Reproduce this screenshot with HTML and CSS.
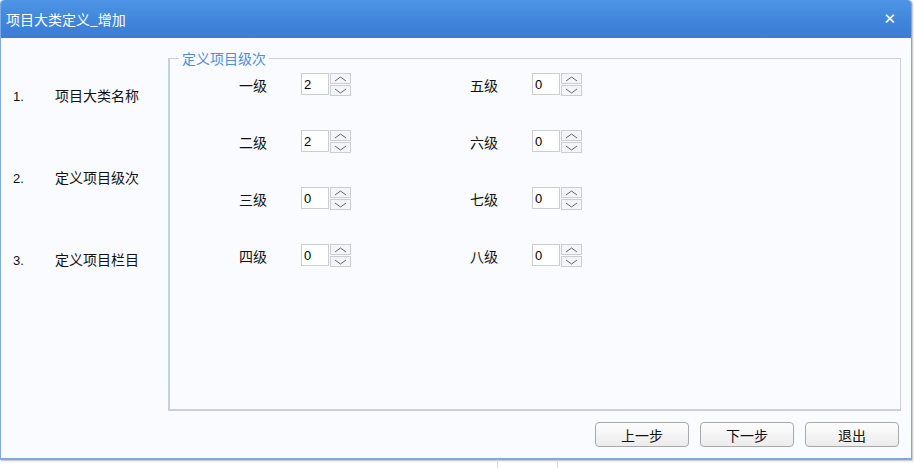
FILE: index.html
```html
<!DOCTYPE html>
<html>
<head>
    <title>项目大类定义_增加</title>
    <link rel="stylesheet" href="styles.css">
</head>
<body>
    <div class="dialog">
        <div class="title-bar">
            <span class="title">项目大类定义_增加</span>
            <span class="close">&#x2715;</span>
        </div>
        <div class="dialog-body">
            <div class="content">
                <ul class="steps">
                    <li><span class="num">1.</span><span class="step-name">项目大类名称</span></li>
                    <li><span class="num">2.</span><span class="step-name">定义项目级次</span></li>
                    <li><span class="num">3.</span><span class="step-name">定义项目栏目</span></li>
                </ul>
                <fieldset class="levels">
                    <legend>定义项目级次</legend>
                    <div class="level-grid" id="grid"></div>
                </fieldset>
            </div>
            <div class="buttons">
                <button>上一步</button>
                <button>下一步</button>
                <button>退出</button>
            </div>
        </div>
    </div>
    <div class="under">
        <div class="under-cell"></div>
    </div>

    <script>
        // left column then right column, filled row by row
        const levels = [
            ["一级", 2], ["五级", 0],
            ["二级", 2], ["六级", 0],
            ["三级", 0], ["七级", 0],
            ["四级", 0], ["八级", 0]
        ];
        const up = '<svg width="13" height="6" viewBox="0 0 13 6"><polyline points="1,5 6.5,1 12,5" fill="none" stroke="#666" stroke-width="1"/></svg>';
        const down = '<svg width="13" height="6" viewBox="0 0 13 6"><polyline points="1,1 6.5,5 12,1" fill="none" stroke="#666" stroke-width="1"/></svg>';

        let grid = document.getElementById("grid");
        levels.forEach(l => {
            let div = document.createElement("div");
            div.className = "level";
            div.innerHTML = `<span class="level-name">${l[0]}</span>
                <div class="spin"><input value="${l[1]}">
                <div class="spin-btns"><span>${up}</span><span>${down}</span></div></div>`;
            grid.appendChild(div);
        });
    </script>
</body>
</html>
```

FILE: styles.css
```css
body {
    margin: 0;
    background: #ffffff;
    font-family: "Noto Sans CJK SC", "DejaVu Sans", sans-serif;
    font-size: 14px;
    color: #111;
}

.dialog {
    width: 910px;
    height: 458px;
    border: 1px solid #7fa9e3;
    border-top: none;
    border-bottom: 2px solid #80a8dc;
    border-radius: 4px 4px 0 0;
    box-shadow: 1px 1px 2px rgba(0,0,0,0.25);
    background: #f9fbff;
    display: flex;
    flex-direction: column;
}

.title-bar {
    height: 38px;
    background: linear-gradient(#4d95e4, #3f84da 60%, #3a7dd4);
    border-radius: 4px 4px 0 0;
    display: flex;
    align-items: center;
    justify-content: space-between;
    padding: 0 15px 0 5px;
    color: #fff;
}

.title {
    font-size: 14px;
}

.close {
    font-size: 15px;
    font-weight: bold;
    font-family: "DejaVu Sans", sans-serif;
}

.dialog-body {
    flex: 1;
    display: flex;
    flex-direction: column;
}

.content {
    display: flex;
    height: 373px;
}

.steps {
    list-style: none;
    margin: 0;
    padding: 47px 0 0 12px;
    width: 155px;
}

.steps li {
    display: flex;
    align-items: baseline;
    height: 82px;
}

.num {
    width: 42px;
    font-family: "Liberation Sans", sans-serif;
    font-size: 13px;
}

.levels {
    flex: 1;
    margin: 10px 10px 0 0;
    padding: 6px 0 0 0;
    border: 1px solid #c7d0de;
    border-left-width: 2px;
    border-bottom-width: 2px;
}

.levels legend {
    color: #4b8ee2;
    padding: 0 3px;
    margin-left: 9px;
    font-size: 14px;
}

.level-grid {
    display: grid;
    grid-template-columns: 231px 231px;
    grid-auto-rows: 57px;
    padding-left: 69px;
}

.level {
    display: flex;
    align-items: center;
    height: 22px;
}

.level-name {
    width: 62px;
}

.spin {
    display: flex;
}

.spin input {
    width: 22px;
    height: 18px;
    padding: 1px 2px;
    border: 1px solid #c9ced6;
    font-family: "Liberation Sans", sans-serif;
    font-size: 13px;
    color: #000;
    background: #fff;
}

.spin-btns {
    display: flex;
    flex-direction: column;
    margin-left: 1px;
}

.spin-btns span {
    width: 19px;
    height: 9px;
    border: 1px solid #c9ced6;
    margin-bottom: 1px;
    background: #f3f5f8;
    display: flex;
    align-items: center;
    justify-content: center;
}

.buttons {
    display: flex;
    justify-content: flex-end;
    gap: 11px;
    padding: 11px 12px 0 0;
}

.buttons button {
    width: 94px;
    height: 25px;
    border: 1px solid #a9a9a9;
    border-radius: 4px;
    background: linear-gradient(#fdfdfd, #ececec);
    font-family: "Noto Sans CJK SC", sans-serif;
    font-size: 14px;
    color: #111;
    padding: 0;
}

.under {
    height: 8px;
    padding-left: 497px;
}

.under-cell {
    width: 59px;
    height: 8px;
    border-left: 1px solid #d8d8d8;
    border-right: 1px solid #d8d8d8;
}
```
